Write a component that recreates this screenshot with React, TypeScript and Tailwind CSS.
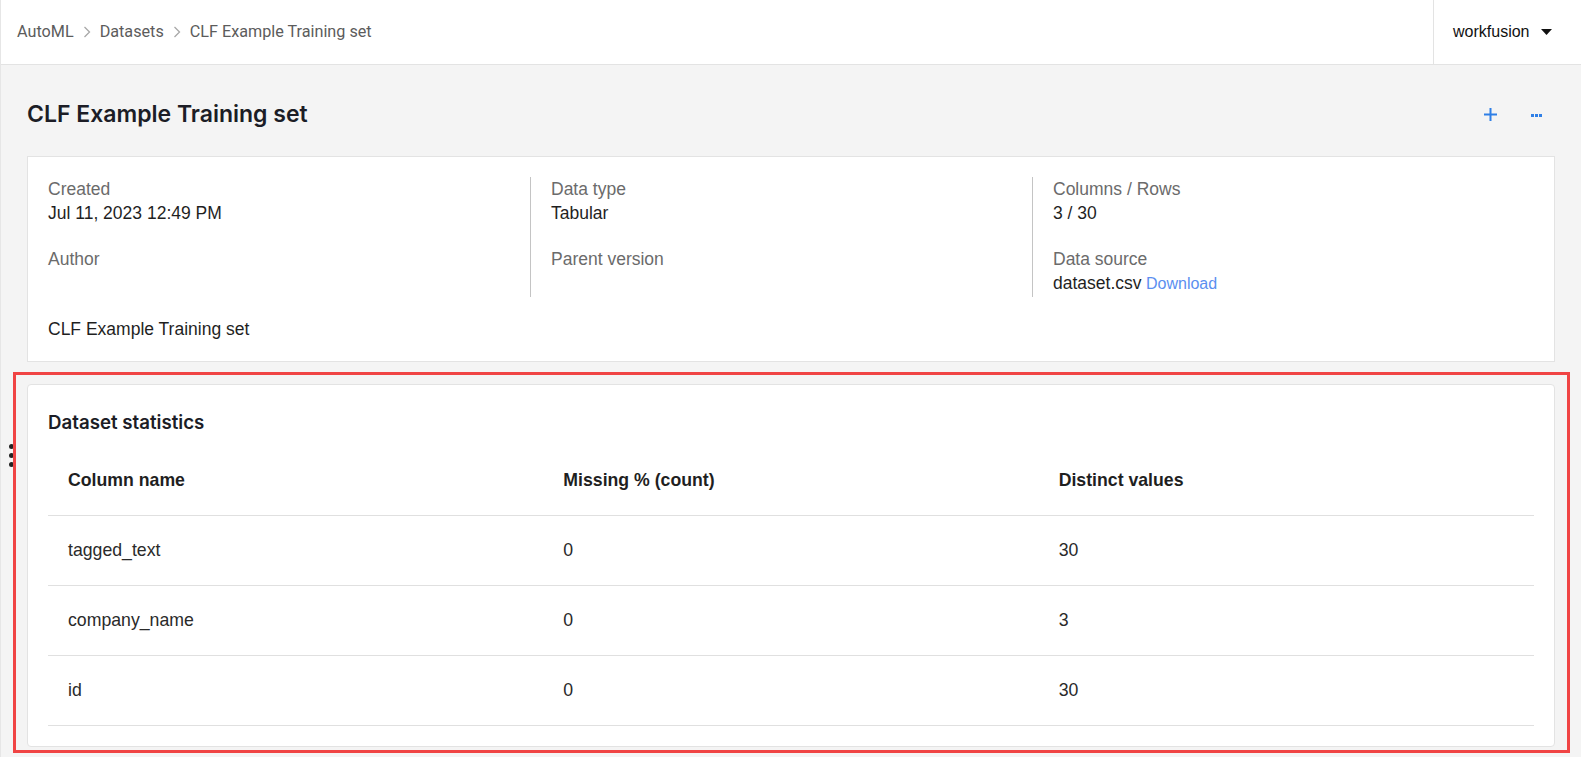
import React from "react";

const arial = { fontFamily: '"Liberation Sans", Arial, sans-serif' };

function Chevron() {
  return (
    <svg width="8" height="12" viewBox="0 0 8 12" className="mx-[9px]" fill="none">
      <path d="M1.5 1 L6.5 6 L1.5 11" stroke="#a8a8a8" strokeWidth="1.3" />
    </svg>
  );
}

function Field({ label, value, extra }: { label: string; value?: string; extra?: string }) {
  return (
    <div>
      <div className="h-[24px] leading-[24px] text-[17.5px] text-[#6b6b6b]">{label}</div>
      <div className="h-[24px] leading-[24px] text-[17.5px] text-[#1f1f1f]">
        {value}
        {extra && <span className="text-[16px] text-[#5b8ff0]"> {extra}</span>}
      </div>
    </div>
  );
}

const rows = [
  ["tagged_text", "0", "30"],
  ["company_name", "0", "3"],
  ["id", "0", "30"],
];

export default function App() {
  return (
    <div className="relative min-h-[757px] bg-[#f4f4f4] border-l border-[#e6e6e6]" style={arial}>
      {/* Header */}
      <header className="flex h-[65px] bg-white border-b border-[#e3e3e3]">
        <nav
          className="flex flex-1 items-center pl-[16px] text-[16.2px] text-[#5c5c5c]"
          style={{ fontFamily: 'Roboto, "Liberation Sans", sans-serif' }}
        >
          <span>AutoML</span>
          <Chevron />
          <span>Datasets</span>
          <Chevron />
          <span>CLF Example Training set</span>
        </nav>
        <div className="flex w-[148px] items-center border-l border-[#e3e3e3] pl-[19px]">
          <span className="text-[16px] text-[#111]">workfusion</span>
          <svg width="11" height="6" viewBox="0 0 11 6" className="ml-[12px]">
            <path d="M0 0 H11 L5.5 6 Z" fill="#111" />
          </svg>
        </div>
      </header>

      <main className="px-[26px]">
        {/* Title row */}
        <div className="flex h-[32px] items-center justify-between mt-[33px] mb-[26px]">
          <h1
            className="text-[23px] font-semibold text-[#1c1d26]"
            style={{ fontFamily: 'Inter, "Noto Sans", sans-serif' }}
          >
            CLF Example Training set
          </h1>
          <div className="flex items-center pr-[13px]">
            <svg width="13" height="13" viewBox="0 0 13 13">
              <path d="M6.5 0 V13 M0 6.5 H13" stroke="#2f7fe6" strokeWidth="2" />
            </svg>
            <svg width="11" height="3" viewBox="0 0 11 3" className="ml-[34px] mt-[2px]">
              <rect x="0" y="0" width="3" height="3" fill="#2f7fe6" />
              <rect x="4" y="0" width="3" height="3" fill="#2f7fe6" />
              <rect x="8" y="0" width="3" height="3" fill="#2f7fe6" />
            </svg>
          </div>
        </div>

        {/* Info card */}
        <section className="bg-white border border-[#e3e3e3] px-[20px] pt-[20px] pb-[20px]">
          <div className="grid grid-cols-[482px_502px_1fr] h-[120px]">
            <div className="flex flex-col gap-[22px]">
              <Field label="Created" value="Jul 11, 2023 12:49 PM" />
              <Field label="Author" />
            </div>
            <div className="flex flex-col gap-[22px] border-l border-[#c4c4c4] pl-[20px]">
              <Field label="Data type" value="Tabular" />
              <Field label="Parent version" />
            </div>
            <div className="flex flex-col gap-[22px] border-l border-[#c4c4c4] pl-[20px]">
              <Field label="Columns / Rows" value="3 / 30" />
              <Field label="Data source" value="dataset.csv" extra="Download" />
            </div>
          </div>
          <div className="mt-[20px] h-[24px] leading-[24px] text-[17.5px] text-[#1f1f1f]">
            CLF Example Training set
          </div>
        </section>

        {/* Stats card */}
        <section className="mt-[22px] bg-white border border-[#e3e3e3] rounded-[4px] px-[20px] pt-[20px] pb-[20px]">
          <h2
            className="flex h-[36px] items-center text-[18.7px] font-semibold text-[#1c1d26]"
            style={{ fontFamily: 'Inter, "Noto Sans", sans-serif' }}
          >
            Dataset statistics
          </h2>
          <div className="mt-[5px]">
            <div className="grid grid-cols-3 h-[70px] items-center border-b border-[#e0e0e0] text-[17.7px] font-bold text-[#1f1f1f]">
              <div className="pl-[20px]">Column name</div>
              <div className="pl-[20px]">Missing % (count)</div>
              <div className="pl-[20px]">Distinct values</div>
            </div>
            {rows.map((r) => (
              <div
                key={r[0]}
                className="grid grid-cols-3 h-[70px] items-center border-b border-[#e0e0e0] text-[17.7px] text-[#2a2a2a]"
              >
                {r.map((c, i) => (
                  <div key={i} className="pl-[20px]">
                    {c}
                  </div>
                ))}
              </div>
            ))}
          </div>
        </section>
      </main>

      {/* Drag grip */}
      <div className="absolute left-[8px] top-[444px] flex flex-col gap-[4px]">
        <span className="block h-[5px] w-[5px] rounded-full bg-[#222]" />
        <span className="block h-[5px] w-[5px] rounded-full bg-[#222]" />
        <span className="block h-[5px] w-[5px] rounded-full bg-[#222]" />
      </div>

      {/* Selection outline */}
      <div className="pointer-events-none absolute left-[12px] top-[372px] h-[381px] w-[1557px] border-[3px] border-[#f04444]" />
    </div>
  );
}
